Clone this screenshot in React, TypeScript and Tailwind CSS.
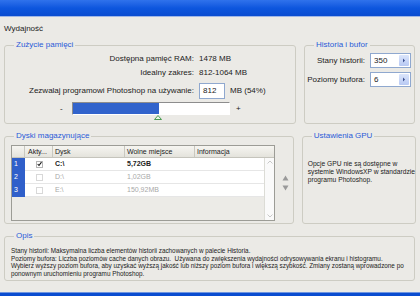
import React from "react";

function Group({ title, className, children }: { title: string; className: string; children?: React.ReactNode }) {
  return (
    <fieldset className={`rounded-[3px] border border-[#cdccc3] ${className}`}>
      <legend className="ml-[9px] px-[2px] text-[8px] leading-[10px] text-[#2a5ad8]">{title}</legend>
      {children}
    </fieldset>
  );
}

function SpinBox({ value }: { value: string }) {
  return (
    <div className="flex h-[15px] w-[41px] items-stretch border border-[#8fa8cf] bg-white">
      <span className="flex-1 pl-[3px] leading-[13px]">{value}</span>
      <span className="m-[1px] flex w-[10px] items-center justify-center rounded-[1px] bg-gradient-to-b from-[#dbe5fb] to-[#b8c9f3]">
        <svg width="4" height="5" viewBox="0 0 4 5">
          <path d="M1 0.5 L3 2.5 L1 4.5 Z" fill="#3b4f8f" />
        </svg>
      </span>
    </div>
  );
}

const drives = [
  { n: "1", on: true, name: "C:\\", free: "5,72GB" },
  { n: "2", on: false, name: "D:\\", free: "1,02GB" },
  { n: "3", on: false, name: "E:\\", free: "150,92MB" },
];

export default function App() {
  return (
    <div className="flex h-[296px] w-[420px] flex-col overflow-hidden bg-[#ebeae6] font-['Liberation_Sans',Arial,sans-serif] text-[8px] text-[#1b1b1b]">
      <div className="h-[16px] bg-gradient-to-b from-[#2f72ec] via-[#0d56de] to-[#0a4cd0]" />
      <div className="h-[1px] bg-[#9fb6e6]" />

      <div className="flex flex-col px-[4px]">
        <div className="mt-[7px] leading-[10px]">Wydajność</div>

        <div className="mt-[6px] flex gap-[8px]">
          <Group title="Zużycie pamięci" className="h-[84px] w-[292px]">
            <div className="mt-[4px] flex leading-[10px]">
              <span className="w-[189px] text-right">Dostępna pamięć RAM:</span>
              <span className="ml-[5px]">1478 MB</span>
            </div>
            <div className="mt-[4px] flex leading-[10px]">
              <span className="w-[189px] text-right">Idealny zakres:</span>
              <span className="ml-[5px]">812-1064 MB</span>
            </div>
            <div className="mt-[5px] flex items-center">
              <span className="w-[189px] text-right">Zezwalaj programowi Photoshop na używanie:</span>
              <div className="ml-[5px] flex h-[16px] w-[26px] items-center border border-[#8fa8cf] bg-white pl-[3px]">812</div>
              <span className="ml-[5px]">MB (54%)</span>
            </div>
            <div className="mt-[3px] flex items-start">
              <span className="ml-[55px] w-[12px] leading-[13px]">-</span>
              <div className="flex flex-col">
                <div className="flex h-[13px] w-[158px] border border-t-[#8d8d8d] border-l-[#8d8d8d] border-b-[#ffffff] border-r-[#ffffff] bg-white">
                  <div className="w-[86px] bg-[#3163cc]" />
                </div>
                <svg className="ml-[82px]" width="8" height="5" viewBox="0 0 8 5">
                  <path d="M4 0.5 L7.5 4.5 L0.5 4.5 Z" fill="#e9f5e6" stroke="#4a9a52" strokeWidth="1" />
                </svg>
              </div>
              <span className="ml-[6px] leading-[13px]">+</span>
            </div>
          </Group>

          <Group title="Historia i bufor" className="h-[84px] w-[111px]">
            <div className="mt-[3px] flex items-center">
              <span className="w-[60px] text-right">Stany historii:</span>
              <div className="ml-[5px]"><SpinBox value="350" /></div>
            </div>
            <div className="mt-[4px] flex items-center">
              <span className="w-[60px] text-right">Poziomy bufora:</span>
              <div className="ml-[5px]"><SpinBox value="6" /></div>
            </div>
          </Group>
        </div>

        <div className="mt-[7px] flex gap-[8px]">
          <Group title="Dyski magazynujące" className="h-[93px] w-[292px]">
            <div className="ml-[6px] mt-[4px] flex items-center">
              <div className="flex h-[76px] w-[264px] flex-col border border-[#9c9c96] bg-[#ecebe7] text-[7px]">
                <div className="grid h-[12px] grid-cols-[13px_28px_72px_70px_1fr] border-b border-[#c5c4bc] bg-gradient-to-b from-[#f6f5f1] to-[#e4e3dc] leading-[11px]">
                  <span className="border-r border-[#c9c8c0]" />
                  <span className="border-r border-[#c9c8c0] pl-[3px]">Akty...</span>
                  <span className="border-r border-[#c9c8c0] pl-[2px]">Dysk</span>
                  <span className="border-r border-[#c9c8c0] pl-[2px]">Wolne miejsce</span>
                  <span className="pl-[2px]">Informacja</span>
                </div>
                <div className="flex flex-1">
                  <div className="flex flex-1 flex-col">
                    {drives.map((d) => (
                      <div key={d.n} className="grid h-[13px] grid-cols-[13px_28px_72px_70px_1fr] leading-[12px]">
                        <span className="bg-[#2f5fca] pl-[2px] text-white">{d.n}</span>
                        <span className="flex items-center justify-center border-b border-[#e6e6e6] bg-white">
                          <span className={`flex h-[7px] w-[7px] items-center justify-center border ${d.on ? "border-[#b5b5b5]" : "border-[#d8d8d8]"}`}>
                            {d.on && (
                              <svg width="6" height="6" viewBox="0 0 6 6">
                                <path d="M0.8 3 L2.4 4.8 L5.4 0.8" fill="none" stroke="#111" strokeWidth="1.3" />
                              </svg>
                            )}
                          </span>
                        </span>
                        <span className={`border-b border-[#e6e6e6] bg-white pl-[2px] ${d.on ? "font-bold text-[#222]" : "text-[#a8a8a8]"}`}>{d.name}</span>
                        <span className={`border-b border-[#e6e6e6] bg-white pl-[2px] ${d.on ? "font-bold text-[#222]" : "text-[#a8a8a8]"}`}>{d.free}</span>
                        <span className="border-b border-[#e6e6e6] bg-white" />
                      </div>
                    ))}
                  </div>
                  <div className="flex w-[10px] flex-col items-center justify-between border-l border-[#dcdcd6] bg-[#fafafa] py-[1px]">
                    <svg width="8" height="6" viewBox="0 0 8 6">
                      <path d="M1.5 4.5 L4 2 L6.5 4.5" fill="none" stroke="#c8c8c8" strokeWidth="1" />
                    </svg>
                    <svg width="8" height="6" viewBox="0 0 8 6">
                      <path d="M1.5 1.5 L4 4 L6.5 1.5" fill="none" stroke="#c8c8c8" strokeWidth="1" />
                    </svg>
                  </div>
                </div>
              </div>
              <div className="ml-[7px] flex flex-col gap-[4px]">
                <svg width="7" height="6" viewBox="0 0 7 6">
                  <path d="M3.5 0.5 L6.5 5.5 L0.5 5.5 Z" fill="#9a9a9a" />
                </svg>
                <svg width="7" height="6" viewBox="0 0 7 6">
                  <path d="M0.5 0.5 L6.5 0.5 L3.5 5.5 Z" fill="#9a9a9a" />
                </svg>
              </div>
            </div>
          </Group>

          <Group title="Ustawienia GPU" className="h-[93px] w-[111px]">
            <p className="mt-[19px] whitespace-nowrap pl-[5px] text-[6.7px] leading-[8px]">
              Opcje GPU nie są dostępne w
              <br />
              systemie WindowsXP w standardzie
              <br />
              programu Photoshop.
            </p>
          </Group>
        </div>

        <Group title="Opis" className="mt-[7px] h-[50px] w-[411px]">
          <p className="mt-[6px] whitespace-nowrap pl-[6px] text-[6.35px] leading-[7.6px]">
            Stany historii: Maksymalna liczba elementów historii zachowanych w palecie Historia.
            <br />
            Poziomy bufora: Liczba poziomów cache danych obrazu.&nbsp; Używana do zwiększenia wydajności odrysowywania ekranu i histogramu.
            <br />
            Wybierz wyższy poziom bufora, aby uzyskać wyższą jakość lub niższy poziom bufora i większą szybkość. Zmiany zostaną wprowadzone po
            <br />
            ponownym uruchomieniu programu Photoshop.
          </p>
        </Group>
      </div>

      <div className="flex-1" />
      <div className="h-[1px] bg-[#6f95e0]" />
      <div className="h-[3px] bg-[#0a4cd0]" />
    </div>
  );
}
